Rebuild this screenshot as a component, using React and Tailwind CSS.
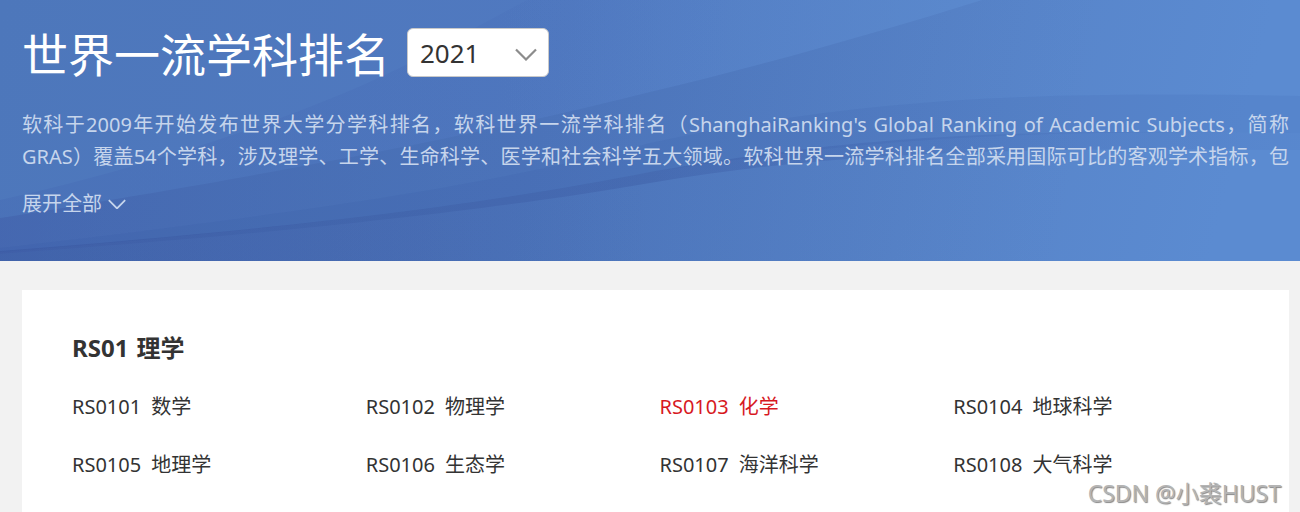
const subjects = [
  { code: 'RS0101', name: '数学' },
  { code: 'RS0102', name: '物理学' },
  { code: 'RS0103', name: '化学', active: true },
  { code: 'RS0104', name: '地球科学' },
  { code: 'RS0105', name: '地理学' },
  { code: 'RS0106', name: '生态学' },
  { code: 'RS0107', name: '海洋科学' },
  { code: 'RS0108', name: '大气科学' },
];

function Chevron({ className }) {
  return (
    <svg viewBox="0 0 22 13" fill="none" stroke="currentColor" aria-hidden="true" className={className}>
      <path d="M1 1.5 11 11.5 21 1.5" strokeWidth="2.2" />
    </svg>
  );
}

function Ribbons() {
  return (
    <svg
      viewBox="0 0 1300 261"
      preserveAspectRatio="none"
      aria-hidden="true"
      className="absolute inset-0 h-full w-full"
    >
      <defs>
        <linearGradient id="base" gradientUnits="userSpaceOnUse" x1="0" y1="0" x2="1200" y2="300">
          <stop offset="0" stopColor="#4d77bb" />
          <stop offset="0.45" stopColor="#5079c0" />
          <stop offset="0.75" stopColor="#5783c8" />
          <stop offset="1" stopColor="#5b8bd1" />
        </linearGradient>
        <linearGradient id="between" gradientUnits="userSpaceOnUse" x1="0" y1="0" x2="982" y2="0">
          <stop offset="0" stopColor="#3f5fae" stopOpacity="0.22" />
          <stop offset="0.45" stopColor="#3f5fae" stopOpacity="0.14" />
          <stop offset="0.75" stopColor="#3f5fae" stopOpacity="0" />
        </linearGradient>
        <linearGradient id="sheen" gradientUnits="userSpaceOnUse" x1="500" y1="0" x2="982" y2="0">
          <stop offset="0" stopColor="#5f90d4" stopOpacity="0" />
          <stop offset="1" stopColor="#5f90d4" stopOpacity="0.4" />
        </linearGradient>
        <linearGradient id="shade" gradientUnits="userSpaceOnUse" x1="0" y1="0" x2="1200" y2="180">
          <stop offset="0" stopColor="#35479a" stopOpacity="0.34" />
          <stop offset="0.35" stopColor="#35559a" stopOpacity="0.22" />
          <stop offset="0.6" stopColor="#35599a" stopOpacity="0.12" />
          <stop offset="0.9" stopColor="#35599a" stopOpacity="0" />
        </linearGradient>
        <linearGradient id="deep" gradientUnits="userSpaceOnUse" x1="0" y1="0" x2="650" y2="0">
          <stop offset="0" stopColor="#35559a" stopOpacity="0.26" />
          <stop offset="0.6" stopColor="#3a4f9a" stopOpacity="0.16" />
          <stop offset="1" stopColor="#35559a" stopOpacity="0" />
        </linearGradient>
        <linearGradient id="band" gradientUnits="userSpaceOnUse" x1="0" y1="0" x2="1300" y2="0">
          <stop offset="0" stopColor="#2e4690" stopOpacity="0.26" />
          <stop offset="0.5" stopColor="#2e4690" stopOpacity="0.24" />
          <stop offset="0.75" stopColor="#2e4fa0" stopOpacity="0.16" />
          <stop offset="1" stopColor="#2e4fa0" stopOpacity="0.06" />
        </linearGradient>
      </defs>
      <rect width="1300" height="261" fill="url(#base)" />
      <path d="M527 0C495 17 455 39 415 60C340 100 180 160 0 200V218C350 162 540 120 650 92C760 66 880 32 982 0Z" fill="url(#between)" />
      <path d="M527 0L415 60L350 160C500 130 600 104 650 92C760 66 880 32 982 0Z" fill="url(#sheen)" />
      <path d="M0 218C350 162 540 120 650 92C760 66 880 32 982 0H1300V261H0Z" fill="url(#shade)" />
      <path d="M0 248C350 208 520 178 650 143C850 100 1020 90 1300 96V133C1050 130 900 134 650 172C500 202 300 228 0 252Z" fill="#2f4f96" fillOpacity="0.09" />
      <path d="M0 251C300 228 500 202 650 172C900 128 1050 131 1300 133V150C1050 149 860 147 650 183C500 209 300 232 0 254Z" fill="url(#band)" />
      <path d="M0 254C300 232 500 209 650 183V261H0Z" fill="url(#deep)" />
    </svg>
  );
}

export default function App() {
  return (
    <div className="relative flex min-h-screen flex-col bg-[#f2f2f2] font-['Noto_Sans','Noto_Sans_CJK_SC',sans-serif] text-[#333]">
      <header className="relative pt-7 pr-[11px] pb-[41px] pl-[22px] text-white">
        <Ribbons />
        <div className="relative">
          <div className="flex items-start gap-[17px]">
            <h1 className="text-[46px] leading-[52px]">世界一流学科排名</h1>
            <div className="relative">
              <select
                aria-label="年份"
                className="block h-[49px] w-[142px] appearance-none rounded-md border border-[#c9c9c9] bg-white pl-3 text-[26px] leading-none text-[#333]"
              >
                <option>2021</option>
              </select>
              <Chevron className="pointer-events-none absolute top-5 right-3 w-[22px] text-[#8c8c8c]" />
            </div>
          </div>
          <p className="mt-[29px] text-justify text-[20px] leading-8 text-[#c6d5ec] [text-align-last:justify]">
            软科于2009年开始发布世界大学分学科排名，软科世界一流学科排名（ShanghaiRanking's Global Ranking of Academic Subjects，简称GRAS）覆盖54个学科，涉及理学、工学、生命科学、医学和社会科学五大领域。软科世界一流学科排名全部采用国际可比的客观学术指标，包
          </p>
          <button type="button" className="mt-[15px] flex h-8 items-center gap-[6px] text-[20px] leading-8 text-[#c6d5ec]">
            展开全部
            <Chevron className="w-[18px]" />
          </button>
        </div>
      </header>
      <main className="mt-[29px] mr-[11px] ml-[22px] flex-1 bg-white pt-[42px] pr-[42px] pb-8 pl-[50px]">
        <h2 className="flex gap-2 text-[24px] leading-8 font-bold">
          <span>RS01</span>
          <span>理学</span>
        </h2>
        <ul className="mt-[27px] grid grid-cols-4 gap-y-[26px] text-[20px] leading-8">
          {subjects.map(({ code, name, active }) => (
            <li key={code}>
              <a href={`#${code}`} className={active ? 'flex gap-[10px] text-[#d7191f]' : 'flex gap-[10px] text-[#333]'}>
                <span>{code}</span>
                <span>{name}</span>
              </a>
            </li>
          ))}
        </ul>
      </main>
      <span className="absolute right-[19px] bottom-1 text-[23px] leading-8 text-[#b4b4b4] [text-shadow:1px_1px_1px_#888,-1px_-1px_0_#fff]">
        CSDN @小裘HUST
      </span>
    </div>
  );
}
